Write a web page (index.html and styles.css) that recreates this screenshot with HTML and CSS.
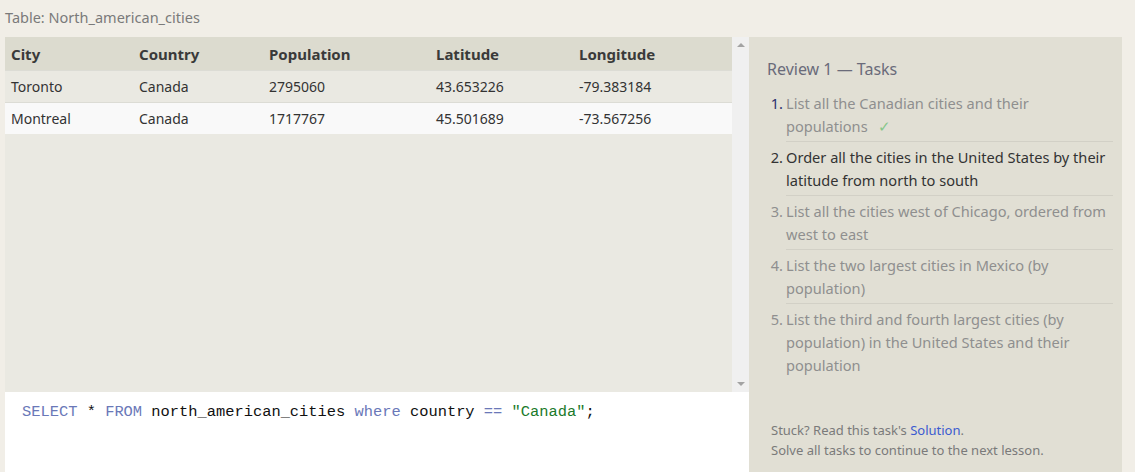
FILE: index.html
```html
<!DOCTYPE html>
<html>
<head>
<meta charset="utf-8">
<link rel="stylesheet" href="styles.css">
</head>
<body>
<div class="label">Table: North_american_cities</div>
<div class="main">
  <div class="left">
    <div class="results">
      <div class="table-wrap">
        <table class="grid">
          <thead>
            <tr><th class="c1">City</th><th class="c2">Country</th><th class="c3">Population</th><th class="c4">Latitude</th><th class="c5">Longitude</th></tr>
          </thead>
          <tbody>
            <tr class="odd"><td>Toronto</td><td>Canada</td><td>2795060</td><td>43.653226</td><td>-79.383184</td></tr>
            <tr class="even"><td>Montreal</td><td>Canada</td><td>1717767</td><td>45.501689</td><td>-73.567256</td></tr>
          </tbody>
        </table>
      </div>
      <div class="scrollbar">
        <span class="arrow up"></span>
        <span class="arrow down"></span>
      </div>
    </div>
    <div class="editor"><span class="kw">SELECT</span> * <span class="kw">FROM</span> north_american_cities <span class="kw">where</span> country <span class="kw">==</span> <span class="str">"Canada"</span>;</div>
  </div>
  <div class="right">
    <div class="title">Review 1 — Tasks</div>
    <ol class="tasks">
      <li class="done"><span class="num">1.</span><span class="txt">List all the Canadian cities and their populations<span class="check">✓</span></span></li>
      <li class="active"><span class="num">2.</span><span class="txt">Order all the cities in the United States by their latitude from north to south</span></li>
      <li><span class="num">3.</span><span class="txt">List all the cities west of Chicago, ordered from west to east</span></li>
      <li><span class="num">4.</span><span class="txt">List the two largest cities in Mexico (by population)</span></li>
      <li class="last"><span class="num">5.</span><span class="txt">List the third and fourth largest cities (by population) in the United States and their population</span></li>
    </ol>
    <div class="footer">
      <div>Stuck? Read this task's <a class="link">Solution</a>.</div>
      <div>Solve all tasks to continue to the next lesson.</div>
    </div>
  </div>
</div>
</body>
</html>
```
FILE: styles.css
```css
html, body {
  margin: 0;
  padding: 0;
}
body {
  background: #f1eee7;
  font-family: "Noto Sans", "Open Sans", sans-serif;
  color: #333;
  width: 1135px;
  height: 472px;
  overflow: hidden;
}
.label {
  font-size: 14.5px;
  color: #7a7a7a;
  padding: 7px 0 0 5px;
  height: 30px;
  box-sizing: border-box;
}
.main {
  display: flex;
  padding-left: 5px;
  margin-top: 7px;
}
.left {
  width: 744px;
  display: flex;
  flex-direction: column;
}
.results {
  height: 355px;
  display: flex;
  background: #eae9e2;
}
.table-wrap {
  flex: 1;
}
.grid {
  border-collapse: collapse;
  width: 100%;
  font-size: 14px;
}
.grid th {
  background: #dcdbcf;
  text-align: left;
  font-weight: 700;
  height: 33px;
  padding: 0 0 0 6px;
  font-size: 15px;
  color: #3a3a3a;
}
.grid td {
  height: 31px;
  padding: 0 0 0 6px;
  border-top: 1px solid #dcdcd5;
  color: #333;
}
.c1 { width: 122px; }
.c2 { width: 124px; }
.c3 { width: 161px; }
.c4 { width: 137px; }
.odd td { background: #eae9e2; }
.even td { background: #f9f9f9; }
.scrollbar {
  width: 17px;
  background: #f0f0f0;
  display: flex;
  flex-direction: column;
  justify-content: space-between;
  align-items: center;
  padding: 6px 0;
  box-sizing: border-box;
}
.arrow {
  width: 0;
  height: 0;
  border-left: 4px solid transparent;
  border-right: 4px solid transparent;
}
.arrow.up { border-bottom: 4px solid #a3a3a3; }
.arrow.down { border-top: 4px solid #a3a3a3; }
.editor {
  background: #fff;
  height: 80px;
  box-sizing: border-box;
  padding: 11px 0 0 17px;
  font-family: "Liberation Mono", "DejaVu Sans Mono", monospace;
  font-size: 15.4px;
  color: #111;
}
.kw { color: #6a78b8; }
.str { color: #1b7a2b; }
.right {
  width: 373px;
  background: #e1dfd4;
  height: 436px;
  box-sizing: border-box;
  padding: 21px 6px 0 18px;
  display: flex;
  flex-direction: column;
}
.title {
  font-size: 16px;
  color: #6a6b7a;
  margin-bottom: 12px;
}
.tasks {
  list-style: none;
  margin: 0;
  padding: 0;
  font-size: 14.6px;
  line-height: 23px;
}
.tasks li {
  display: flex;
  color: #8f8f8f;
}
.num {
  width: 16px;
  margin-right: 3px;
  text-align: right;
  flex: none;
}
.txt {
  flex: 1;
  padding: 0 0 3px 0;
  border-bottom: 1px solid #d2d0c6;
  margin-bottom: 4px;
  margin-right: 3px;
}
.last .txt { border-bottom: none; }
.done .num { color: #2c2f6e; }
.active { color: #333 !important; }
.check {
  display: inline-block;
  color: #86c68a;
  margin-left: 10px;
}
.footer {
  margin-top: auto;
  margin-bottom: 13px;
  padding-left: 4px;
  font-size: 13px;
  line-height: 20px;
  color: #7a7a7a;
}
.link { color: #3b5bd0; }
```
